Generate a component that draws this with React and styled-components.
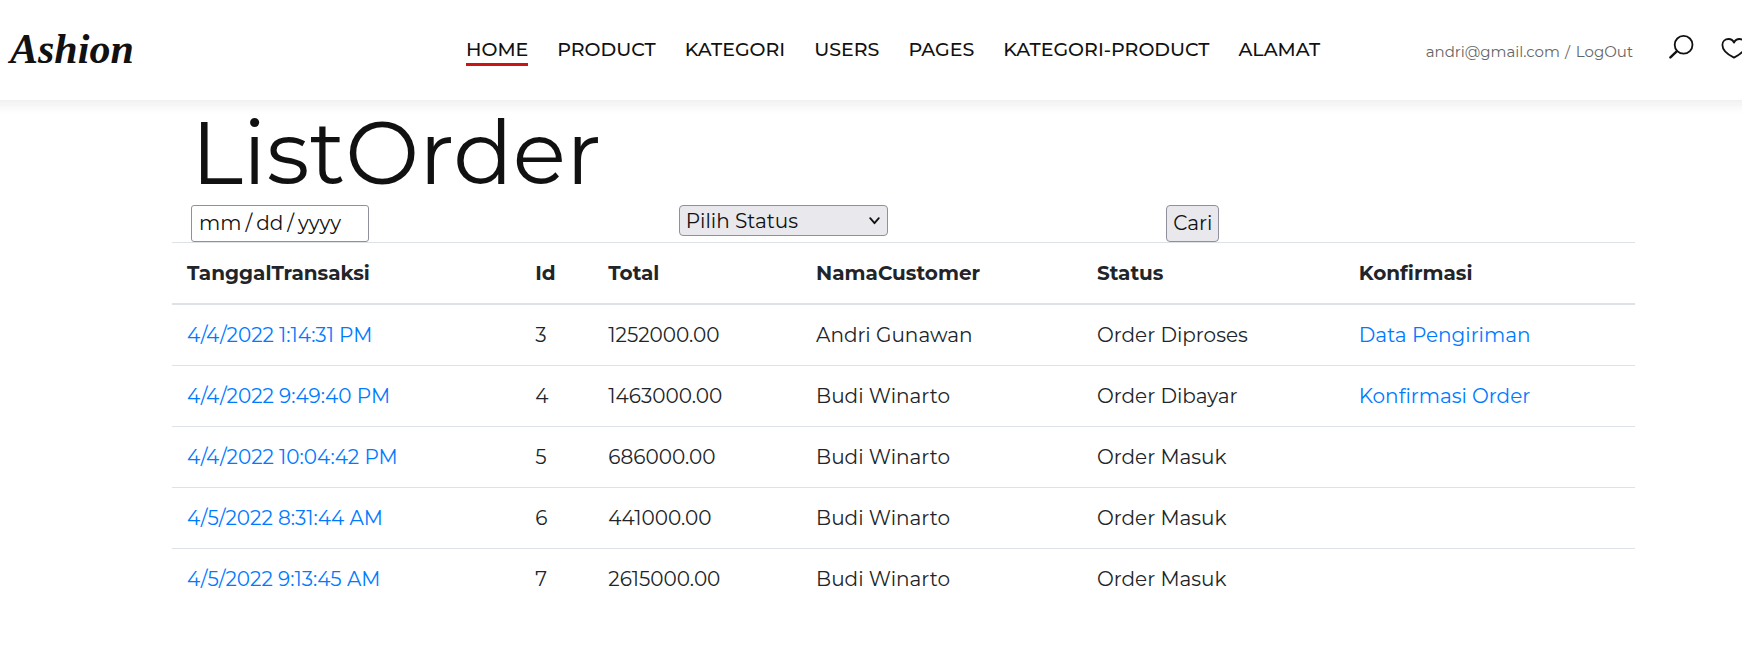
import React from "react";
import styled, { createGlobalStyle } from "styled-components";

const GlobalStyle = createGlobalStyle`
  *, *::before, *::after { box-sizing: border-box; }
  body {
    margin: 0;
    background: #fff;
    color: #111;
    font-family: Montserrat, Inter, "Open Sans", sans-serif;
    font-size: 20px;
    line-height: 30px;
    overflow-x: hidden;
  }
  a { text-decoration: none; }
`;

const Header = styled.header`
  display: grid;
  grid-template-columns: 456px 1fr auto;
  height: 100px;
  padding-left: 10px;
  overflow: hidden;
  background: #fff;
`;

const HeaderShadow = styled.div`
  margin: 0 -20px;
  padding: 0 20px;
  box-shadow: 0 5px 10px rgba(91, 91, 91, 0.1);
`;

const Logo = styled.a`
  padding-top: 27px;
  color: #111;
  font: italic bold 42px/44px "Liberation Serif", serif;
`;

const Nav = styled.nav`
  display: flex;
  align-items: flex-start;
  gap: 29px;
  padding-top: 35px;
`;

const NavLink = styled.a`
  height: 31px;
  color: #111;
  font-size: 19px;
  font-weight: 500;
  white-space: nowrap;
  border-bottom: 3px solid ${(p) => (p.$active ? "#ca1515" : "transparent")};
`;

const Account = styled.div`
  display: flex;
  align-items: flex-start;
  margin-right: -5px;
  color: #666;
  font-size: 15px;
  white-space: nowrap;
`;

const AccountLinks = styled.div`
  margin: 37px 36px 0 0;
  a { color: inherit; }
`;

const Divider = styled.span`
  margin: 0 2px 0 1px;
`;

const IconButton = styled.button`
  display: block;
  margin: 35px 27px 0 0;
  padding: 0;
  border: 0;
  background: none;
  color: #111;
  &:last-child { margin-right: 0; }
  svg { display: block; }
`;

const Main = styled.main`
  margin: 0 107px 0 172px;
`;

const Title = styled.h1`
  margin: 0;
  padding: 0 19px;
  font-size: 88px;
  line-height: 105px;
  font-weight: 400;
`;

const Filters = styled.form`
  display: grid;
  grid-template-columns: repeat(3, 1fr);
  align-items: start;
  height: 37px;
`;

const FilterCell = styled.div`
  display: flex;
  padding: 0 19px;
`;

const DateInput = styled.input`
  width: 178px;
  height: 37px;
  padding: 0 6px 2px;
  border: 1px solid #8f8f9d;
  border-radius: 3px;
  background: #fff;
  color: #111;
  font: inherit;
  &::-webkit-calendar-picker-indicator { display: none; }
  &::-webkit-datetime-edit-text { padding: 0 3px; }
`;

const SelectWrap = styled.div`
  position: relative;
  svg { position: absolute; right: 8px; top: 12px; pointer-events: none; }
`;

const Select = styled.select`
  display: block;
  appearance: none;
  width: 209px;
  height: 31px;
  padding: 0 6px;
  border: 1px solid #8f8f9d;
  border-radius: 4px;
  background: #e9e9ed;
  color: #111;
  font: inherit;
`;

const SubmitButton = styled.button`
  width: 53px;
  height: 37px;
  padding: 0 0 2px;
  border: 1px solid #8f8f9d;
  border-radius: 4px;
  background: #e9e9ed;
  color: #111;
  font: inherit;
`;

const Table = styled.table`
  width: 100%;
  table-layout: fixed;
  border-collapse: separate;
  border-spacing: 0;
  color: #212529;
`;

const Column = styled.col`
  width: ${(p) => p.$share}%;
`;

const HeadCell = styled.th`
  padding: 15px;
  border-top: 1px solid #dee2e6;
  border-bottom: 2px solid #dee2e6;
  font-weight: 700;
  text-align: left;
`;

const Cell = styled.td`
  padding: 15px;
  border-bottom: 1px solid #dee2e6;
  white-space: nowrap;
  tr:last-child & { border-bottom: 0; }
  a { color: #007bff; }
`;

const navItems = ["HOME", "PRODUCT", "KATEGORI", "USERS", "PAGES", "KATEGORI-PRODUCT", "ALAMAT"];

const columns = [
  ["TanggalTransaksi", 23.8],
  ["Id", 5],
  ["Total", 14.2],
  ["NamaCustomer", 19.2],
  ["Status", 17.9],
  ["Konfirmasi", 19.9],
];

const orders = [
  ["4/4/2022 1:14:31 PM", 3, "1252000.00", "Andri Gunawan", "Order Diproses", "Data Pengiriman"],
  ["4/4/2022 9:49:40 PM", 4, "1463000.00", "Budi Winarto", "Order Dibayar", "Konfirmasi Order"],
  ["4/4/2022 10:04:42 PM", 5, "686000.00", "Budi Winarto", "Order Masuk", ""],
  ["4/5/2022 8:31:44 AM", 6, "441000.00", "Budi Winarto", "Order Masuk", ""],
  ["4/5/2022 9:13:45 AM", 7, "2615000.00", "Budi Winarto", "Order Masuk", ""],
];

const SearchIcon = () => (
  <svg width="25" height="24" viewBox="0 0 25 24" fill="none" stroke="currentColor" strokeWidth="1.8" strokeLinecap="round">
    <circle cx="14.6" cy="9.8" r="8.9" />
    <path d="M8 16.2 1.4 22.4" strokeWidth="2.4" />
  </svg>
);

const HeartIcon = () => (
  <svg width="26" height="24" viewBox="0 0 26 24" fill="none" stroke="currentColor" strokeWidth="1.8" strokeLinejoin="round">
    <path d="M13 7.6C11.9 5.2 9.9 4 7.6 4 4.1 4 1.4 6.4 1.4 10c0 6.2 6.8 10.3 11.6 12.6C17.8 20.3 24.6 16.2 24.6 10c0-3.6-2.7-6-6.2-6-2.3 0-4.3 1.2-5.4 3.6Z" />
  </svg>
);

const ChevronIcon = () => (
  <svg width="11" height="8" viewBox="0 0 11 8" fill="none" stroke="#111" strokeWidth="1.8" strokeLinecap="round" strokeLinejoin="round">
    <path d="m1.2 1.2 4.3 5 4.3-5" />
  </svg>
);

export default function App() {
  return (
    <>
      <GlobalStyle />
      <HeaderShadow>
        <Header>
          <Logo href="#">Ashion</Logo>
          <Nav>
            {navItems.map((item, i) => (
              <NavLink key={item} href="#" $active={i === 0}>{item}</NavLink>
            ))}
          </Nav>
          <Account>
            <AccountLinks>
              <a href="#">andri@gmail.com</a> <Divider>/</Divider> <a href="#">LogOut</a>
            </AccountLinks>
            <IconButton type="button" aria-label="Search"><SearchIcon /></IconButton>
            <IconButton type="button" aria-label="Wishlist"><HeartIcon /></IconButton>
          </Account>
        </Header>
      </HeaderShadow>
      <Main>
        <Title>ListOrder</Title>
        <Filters onSubmit={(e) => e.preventDefault()}>
          <FilterCell>
            <DateInput type="date" aria-label="Tanggal" />
          </FilterCell>
          <FilterCell>
            <SelectWrap>
              <Select aria-label="Status">
                <option>Pilih Status</option>
                <option>Order Masuk</option>
                <option>Order Dibayar</option>
                <option>Order Diproses</option>
              </Select>
              <ChevronIcon />
            </SelectWrap>
          </FilterCell>
          <FilterCell>
            <SubmitButton type="submit">Cari</SubmitButton>
          </FilterCell>
        </Filters>
        <Table>
          <colgroup>
            {columns.map(([name, share]) => <Column key={name} $share={share} />)}
          </colgroup>
          <thead>
            <tr>
              {columns.map(([name]) => <HeadCell key={name} scope="col">{name}</HeadCell>)}
            </tr>
          </thead>
          <tbody>
            {orders.map(([date, id, total, customer, status, action]) => (
              <tr key={id}>
                <Cell><a href="#">{date}</a></Cell>
                <Cell>{id}</Cell>
                <Cell>{total}</Cell>
                <Cell>{customer}</Cell>
                <Cell>{status}</Cell>
                <Cell>{action && <a href="#">{action}</a>}</Cell>
              </tr>
            ))}
          </tbody>
        </Table>
      </Main>
    </>
  );
}
